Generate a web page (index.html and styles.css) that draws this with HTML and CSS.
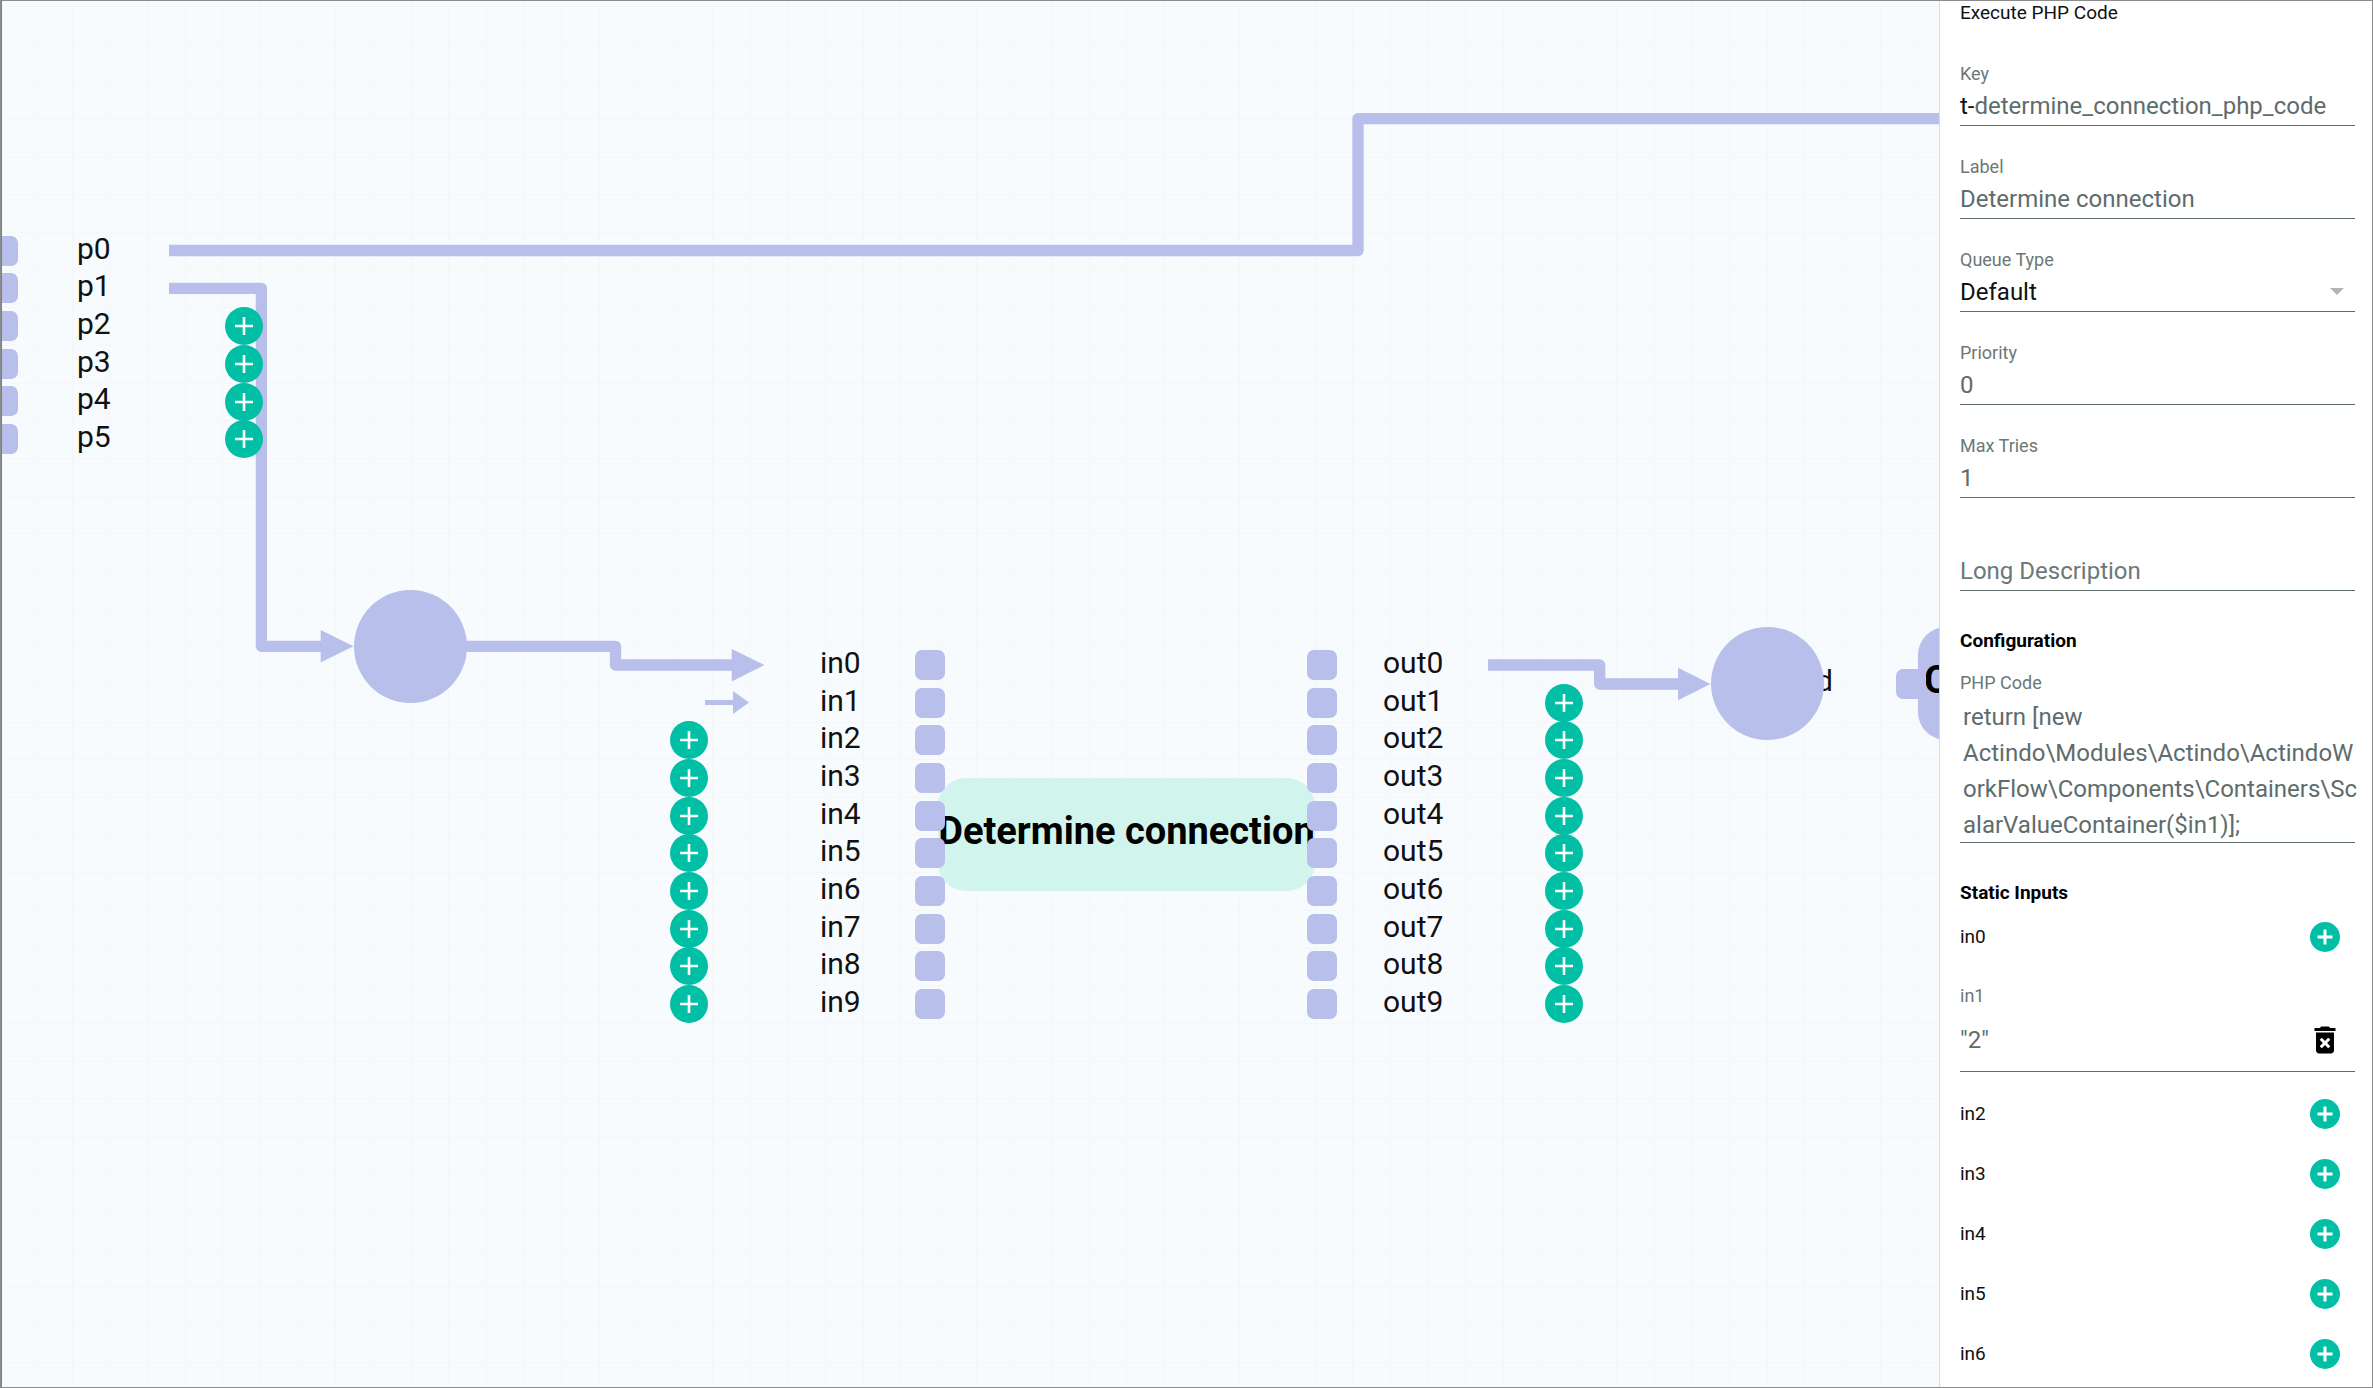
FILE: index.html
```html
<!DOCTYPE html>
<html lang="en">
<head>
<meta charset="utf-8">
<title>Workflow editor</title>
<meta name="viewport" content="width=device-width, initial-scale=1">
<link rel="stylesheet" href="styles.css">
</head>
<body>
<svg class="sprite" aria-hidden="true">
  <symbol id="plus" viewBox="0 0 38 38"><path d="M19 10v18M10 19h18" fill="none" stroke="#fff" stroke-width="2.6"/></symbol>
  <symbol id="plus-bold" viewBox="0 0 30 30"><path d="M15 7.500v15M7.500 15h15" fill="none" stroke="#fff" stroke-width="3"/></symbol>
  <symbol id="trash" viewBox="0 0 24 24"><path d="M6 19c0 1.100.9 2 2 2h8c1.100 0 2-.9 2-2V7H6v12zm2.460-7.120l1.410-1.410L12 12.590l2.120-2.120 1.410 1.410L13.410 14l2.120 2.120-1.410 1.410L12 15.410l-2.120 2.120-1.410-1.410L10.590 14l-2.130-2.120zM15.500 4l-1-1h-5l-1 1H5v2h14V4z"/></symbol>
</svg>
<div class="editor">
  <main class="canvas">
    <svg class="wires" aria-hidden="true">
      <defs>
        <pattern id="grid" x="34" y="6" width="113" height="113" patternUnits="userSpaceOnUse">
          <path class="grid-line" d="M.5 0v113M38.500 0v113M75.500 0v113M0 .5h113M0 38.500h113M0 75.500h113"/>
        </pattern>
      </defs>
      <rect width="100%" height="100%" fill="url(#grid)"/>
      <path class="wire" d="M169 250.500H1358V118.700H2400"/>
      <path class="wire" d="M169 288.300H261.400V646.300H322"/>
      <path class="wire" d="M460 646.300H615.500V665H733"/>
      <path class="wire" d="M1488 665H1599.700V684H1679"/>
      <path class="wire wire-thin" d="M705 702.500H734"/>
      <path class="tip" d="M320.700 630v32.500L353.500 646.300z"/>
      <path class="tip" d="M731.700 649v32.500L764.300 665z"/>
      <path class="tip" d="M1678 667.700v32.500L1710.500 684z"/>
      <path class="tip" d="M733 691v23L749 702.500z"/>
    </svg>

    <section class="node node-source" aria-label="Source node">
      <div class="port-squares"><i></i><i></i><i></i><i></i><i></i><i></i></div>
      <div class="port-labels"><span>p0</span><span>p1</span><span>p2</span><span>p3</span><span>p4</span><span>p5</span></div>
      <div class="port-adds"><b></b><b></b>
        <button aria-label="Connect p2"><svg><use href="#plus"/></svg></button>
        <button aria-label="Connect p3"><svg><use href="#plus"/></svg></button>
        <button aria-label="Connect p4"><svg><use href="#plus"/></svg></button>
        <button aria-label="Connect p5"><svg><use href="#plus"/></svg></button>
      </div>
    </section>

    <div class="joint joint-left"></div>

    <section class="node node-determine" aria-label="Determine connection">
      <div class="port-adds"><b></b><b></b>
        <button aria-label="Connect in2"><svg><use href="#plus"/></svg></button>
        <button aria-label="Connect in3"><svg><use href="#plus"/></svg></button>
        <button aria-label="Connect in4"><svg><use href="#plus"/></svg></button>
        <button aria-label="Connect in5"><svg><use href="#plus"/></svg></button>
        <button aria-label="Connect in6"><svg><use href="#plus"/></svg></button>
        <button aria-label="Connect in7"><svg><use href="#plus"/></svg></button>
        <button aria-label="Connect in8"><svg><use href="#plus"/></svg></button>
        <button aria-label="Connect in9"><svg><use href="#plus"/></svg></button>
      </div>
      <div class="port-labels port-labels-in"><span>in0</span><span>in1</span><span>in2</span><span>in3</span><span>in4</span><span>in5</span><span>in6</span><span>in7</span><span>in8</span><span>in9</span></div>
      <div class="port-squares"><i></i><i></i><i></i><i></i><i></i><i></i><i></i><i></i><i></i><i></i></div>
      <h1 class="box box-task">Determine connection</h1>
      <div class="port-squares"><i></i><i></i><i></i><i></i><i></i><i></i><i></i><i></i><i></i><i></i></div>
      <div class="port-labels port-labels-out"><span>out0</span><span>out1</span><span>out2</span><span>out3</span><span>out4</span><span>out5</span><span>out6</span><span>out7</span><span>out8</span><span>out9</span></div>
      <div class="port-adds"><b></b>
        <button aria-label="Connect out1"><svg><use href="#plus"/></svg></button>
        <button aria-label="Connect out2"><svg><use href="#plus"/></svg></button>
        <button aria-label="Connect out3"><svg><use href="#plus"/></svg></button>
        <button aria-label="Connect out4"><svg><use href="#plus"/></svg></button>
        <button aria-label="Connect out5"><svg><use href="#plus"/></svg></button>
        <button aria-label="Connect out6"><svg><use href="#plus"/></svg></button>
        <button aria-label="Connect out7"><svg><use href="#plus"/></svg></button>
        <button aria-label="Connect out8"><svg><use href="#plus"/></svg></button>
        <button aria-label="Connect out9"><svg><use href="#plus"/></svg></button>
      </div>
    </section>

    <section class="node node-next" aria-label="Next node">
      <span class="next-port">d</span>
      <div class="port-squares"><i></i></div>
      <div class="box box-next">C</div>
    </section>
    <div class="joint joint-right"></div>
  </main>

  <aside class="panel">
    <p class="panel-title">Execute PHP Code</p>
    <div class="field">
      <label for="key">Key</label>
      <div class="control"><span class="prefix">t-</span><input id="key" type="text" value="determine_connection_php_code"></div>
    </div>
    <div class="field">
      <label for="label">Label</label>
      <div class="control"><input id="label" type="text" value="Determine connection"></div>
    </div>
    <div class="field">
      <label for="queue">Queue Type</label>
      <div class="control control-select"><select id="queue"><option>Default</option></select></div>
    </div>
    <div class="field">
      <label for="priority">Priority</label>
      <div class="control"><input id="priority" type="text" value="0"></div>
    </div>
    <div class="field">
      <label for="tries">Max Tries</label>
      <div class="control"><input id="tries" type="text" value="1"></div>
    </div>
    <div class="field field-empty">
      <div class="control"><input type="text" aria-label="Long Description" placeholder="Long Description"></div>
    </div>

    <h2>Configuration</h2>
    <div class="code-field">
      <label for="code">PHP Code</label>
      <textarea id="code" rows="4" spellcheck="false">return [new Actindo\Modules\Actindo\ActindoWorkFlow\Components\Containers\ScalarValueContainer($in1)];</textarea>
    </div>

    <h2>Static Inputs</h2>
    <div class="static-list">
      <div class="static-row"><span>in0</span><button aria-label="Add in0"><svg><use href="#plus-bold"/></svg></button></div>
      <div class="static-field">
        <label for="in1">in1</label>
        <div class="static-value"><input id="in1" type="text" value='"2"'><button class="delete" aria-label="Delete in1"><svg><use href="#trash"/></svg></button></div>
      </div>
      <div class="static-row"><span>in2</span><button aria-label="Add in2"><svg><use href="#plus-bold"/></svg></button></div>
      <div class="static-row"><span>in3</span><button aria-label="Add in3"><svg><use href="#plus-bold"/></svg></button></div>
      <div class="static-row"><span>in4</span><button aria-label="Add in4"><svg><use href="#plus-bold"/></svg></button></div>
      <div class="static-row"><span>in5</span><button aria-label="Add in5"><svg><use href="#plus-bold"/></svg></button></div>
      <div class="static-row"><span>in6</span><button aria-label="Add in6"><svg><use href="#plus-bold"/></svg></button></div>
    </div>
  </aside>
</div>
</body>
</html>
```
FILE: styles.css
```css
:root {
  --wire: #b7bfea;
  --teal: #00bfa5;
  --muted: #5e6c6c;
  --label: #6c7877;
}

* { box-sizing: border-box; }

body {
  margin: 0;
  font-family: Roboto, sans-serif;
  font-size: 19px;
  line-height: 24px;
  color: #111;
}

button, input, select, textarea {
  margin: 0;
  padding: 0;
  border: 0;
  background: none;
  font: inherit;
  color: inherit;
  outline: 0;
}

.sprite { display: none; }

.editor {
  position: relative;
  display: flex;
  height: 100vh;
  overflow: hidden;
}

/* window frame, drawn over both panes */
.editor::after {
  content: "";
  position: absolute;
  inset: 0;
  border: 1px solid #8c8c8c;
  box-shadow: inset 1px 0 #4f86e0;
  pointer-events: none;
}

/* diagram */
.canvas {
  position: relative;
  flex: 1;
  min-width: 0;
  overflow: hidden;
  background: #f8fbfe;
}

.wires {
  position: absolute;
  inset: 0;
  width: 100%;
  height: 100%;
}

.grid-line { fill: none; stroke: #f4f6f8; stroke-width: 1; }
.wire { fill: none; stroke: var(--wire); stroke-width: 11.300; stroke-linejoin: round; }
.wire-thin { stroke-width: 5; }
.tip { fill: var(--wire); }

.node { position: absolute; display: flex; align-items: stretch; }
.node-source { left: -12px; top: 232px; height: 226px; }
.node-determine { left: 670px; top: 646px; height: 377px; }
.node-next { left: 1816px; top: 627px; height: 113px; }

.port-squares, .port-labels, .port-adds {
  display: grid;
  grid-auto-rows: minmax(0, 1fr);
  align-items: center;
}

.port-squares { position: relative; width: 30px; }
.port-squares i {
  height: 30px;
  border-radius: 7px;
  background: var(--wire);
}

.port-labels {
  font-size: 30px;
  line-height: 30px;
}
.port-labels span { padding-bottom: 4px; }

.port-adds { width: 38px; }
.port-adds button {
  height: 38px;
  border-radius: 50%;
  background: var(--teal);
}
button svg { display: block; width: 100%; height: 100%; }

.node-source .port-labels { margin-left: 59px; width: 148px; }
.port-labels-in { margin-left: 112px; width: 95px; }
.port-labels-out { margin-left: 46px; width: 162px; }

.box {
  display: flex;
  align-items: center;
  justify-content: center;
  height: 113px;
  margin: 0;
  padding-bottom: 7px;
  border-radius: 28px;
  font-size: 38px;
  font-weight: 700;
  line-height: 44px;
  white-space: nowrap;
  color: #000;
}
.box-task {
  align-self: center;
  width: 377px;
  margin: 0 -8px 0 -7px;
  background: #d1f4ed;
}
.box-next {
  justify-content: flex-start;
  width: 377px;
  margin-left: -8px;
  padding-left: 6px;
  background: var(--wire);
}

.next-port {
  align-self: center;
  width: 80px;
  padding-bottom: 6px;
  font-size: 30px;
  line-height: 30px;
}

.joint {
  position: absolute;
  width: 113px;
  height: 113px;
  border-radius: 50%;
  background: var(--wire);
}
.joint-left { left: 354px; top: 590px; }
.joint-right { left: 1711px; top: 627px; }

/* properties panel */
.panel {
  flex: none;
  width: 434px;
  padding: 1px 18px 0 20px;
  border-left: 1px solid #d9dbde;
  background: #fff;
}

.panel-title { margin: 0 0 8px; }

label { display: block; font-size: 18px; color: var(--label); }

.field {
  padding-top: 29px;
  border-bottom: 1px solid var(--muted);
}
.field-empty { padding-top: 53px; }

.control {
  display: flex;
  align-items: center;
  height: 39px;
  font-size: 24px;
  color: var(--muted);
}
.control input, .control select { flex: 1; min-width: 0; height: 38px; }
.control ::placeholder { color: var(--label); opacity: 1; }
.prefix { color: #111; }

.control-select { position: relative; color: #111; }
.control-select select { appearance: none; }
.control-select::after {
  content: "";
  position: absolute;
  right: 11px;
  border: 7px solid transparent;
  border-top-color: #b4b4b4;
  border-bottom: 0;
  pointer-events: none;
}

h2 {
  margin: 38px 0 0;
  font-size: 19px;
  font-weight: 700;
  line-height: 24px;
  color: #000;
}

.code-field {
  display: flex;
  flex-direction: column;
  margin-top: 18px;
  border-bottom: 1px solid var(--muted);
}
.code-field textarea {
  height: 143px;
  margin: 4px -4px 0 0;
  padding-left: 3px;
  font-size: 24px;
  line-height: 36px;
  color: var(--muted);
  resize: none;
  overflow: hidden;
}

.static-list { margin-top: 2px; }
.static-row {
  display: flex;
  align-items: center;
  justify-content: space-between;
  height: 60px;
  padding-right: 15px;
}
.static-row button {
  width: 30px;
  height: 30px;
  border-radius: 50%;
  background: var(--teal);
}

.static-field {
  margin-bottom: 12px;
  padding-top: 17px;
  border-bottom: 1px solid var(--muted);
}
.static-value {
  display: flex;
  align-items: center;
  height: 63px;
  padding-right: 12px;
}
.static-value input {
  flex: 1;
  min-width: 0;
  font-size: 24px;
  color: var(--muted);
}
.delete { width: 36px; height: 36px; color: #000; }
```
